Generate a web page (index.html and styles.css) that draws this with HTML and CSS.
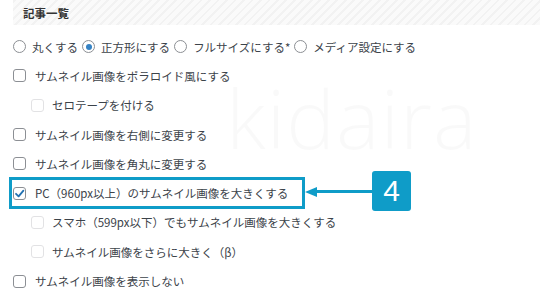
FILE: index.html
```html
<!DOCTYPE html>
<html lang="ja">
<head>
<meta charset="utf-8">
<link rel="stylesheet" href="styles.css">
</head>
<body>
<div class="page">
  <div class="watermark">kidaira</div>
  <div class="head"><span class="title">記事一覧</span></div>
  <div class="list">
    <div class="row radios">
      <span class="opt"><span class="radio"></span>丸くする</span>
      <span class="opt"><span class="radio on"></span>正方形にする</span>
      <span class="opt"><span class="radio"></span>フルサイズにする*</span>
      <span class="opt"><span class="radio"></span>メディア設定にする</span>
    </div>
    <div class="row"><span class="cb"></span>サムネイル画像をポラロイド風にする</div>
    <div class="row sub"><span class="cb dis"></span>セロテープを付ける</div>
    <div class="row"><span class="cb"></span>サムネイル画像を右側に変更する</div>
    <div class="row"><span class="cb"></span>サムネイル画像を角丸に変更する</div>
    <div class="row"><span class="cb on"><svg viewBox="0 0 13 13" width="13" height="13"><path d="M3 6.8 L5.6 9.4 L10.4 3.6" fill="none" stroke="#2271b1" stroke-width="1.8" stroke-linecap="round" stroke-linejoin="round"/></svg></span>PC（960px以上）のサムネイル画像を大きくする</div>
    <div class="row sub"><span class="cb dis"></span>スマホ（599px以下）でもサムネイル画像を大きくする</div>
    <div class="row sub"><span class="cb dis"></span>サムネイル画像をさらに大きく（β）</div>
    <div class="row"><span class="cb"></span>サムネイル画像を表示しない</div>
  </div>
  <div class="hl-box"></div>
  <div class="arrow"><span class="arrow-head"></span><span class="arrow-line"></span></div>
  <div class="badge">4</div>
</div>
</body>
</html>
```
FILE: styles.css
```css
html, body {
  margin: 0;
  padding: 0;
  background: #fff;
}
.page {
  position: relative;
  width: 540px;
  height: 304px;
  overflow: hidden;
  font-family: "Noto Sans CJK JP", "Noto Sans", sans-serif;
  font-size: 11.5px;
  color: #3c434a;
}
.watermark {
  position: absolute;
  left: 226px;
  top: 76px;
  font-family: "Open Sans", sans-serif;
  font-weight: 300;
  font-size: 82px;
  line-height: 1;
  color: rgba(0, 0, 0, 0.022);
  letter-spacing: 1px;
}
.head {
  position: relative;
  margin-left: 13px;
  height: 25px;
  display: flex;
  align-items: center;
  padding-left: 10px;
  background: repeating-linear-gradient(-45deg, #fafafa 0 4px, #f2f2f2 4px 6px);
}
.title {
  font-weight: bold;
  color: #333;
  font-size: 11.5px;
}
.list {
  position: relative;
  padding: 7px 0 0 13px;
}
.row {
  height: 29.3px;
  display: flex;
  align-items: center;
  white-space: nowrap;
}
.row.sub {
  padding-left: 18px;
}
.radios .opt {
  display: inline-flex;
  align-items: center;
  margin-right: 4px;
}
.radio {
  width: 13px;
  height: 13px;
  box-sizing: border-box;
  border: 1px solid #8c8f94;
  border-radius: 50%;
  margin-right: 6px;
  display: inline-flex;
  align-items: center;
  justify-content: center;
  background: #fff;
}
.radio.on::after {
  content: "";
  width: 6px;
  height: 6px;
  border-radius: 50%;
  background: #3582c4;
}
.cb {
  width: 13px;
  height: 13px;
  box-sizing: border-box;
  border: 1px solid #8c8f94;
  border-radius: 3px;
  margin-right: 9px;
  background: #fff;
  position: relative;
  flex: none;
}
.cb svg {
  position: absolute;
  left: -1px;
  top: -1px;
}
.cb.dis {
  border-color: #e2e2e4;
  margin-right: 8px;
}
.hl-box {
  position: absolute;
  left: 9px;
  top: 177px;
  width: 296px;
  height: 32px;
  box-sizing: border-box;
  border: 3px solid #0f9cc8;
}
.arrow {
  position: absolute;
  left: 305px;
  top: 186px;
  width: 68px;
  height: 11px;
  display: flex;
  align-items: center;
}
.arrow-head {
  width: 0;
  height: 0;
  border-top: 5.5px solid transparent;
  border-bottom: 5.5px solid transparent;
  border-right: 12px solid #0f9cc8;
}
.arrow-line {
  flex: 1;
  height: 3px;
  background: #0f9cc8;
}
.badge {
  position: absolute;
  left: 372px;
  top: 171px;
  width: 39px;
  height: 40px;
  border-radius: 3px;
  background: #0f9cc8;
  color: #fff;
  font-family: "Liberation Sans", Arial, sans-serif;
  font-size: 30px;
  line-height: 40px;
  text-align: center;
}
```
